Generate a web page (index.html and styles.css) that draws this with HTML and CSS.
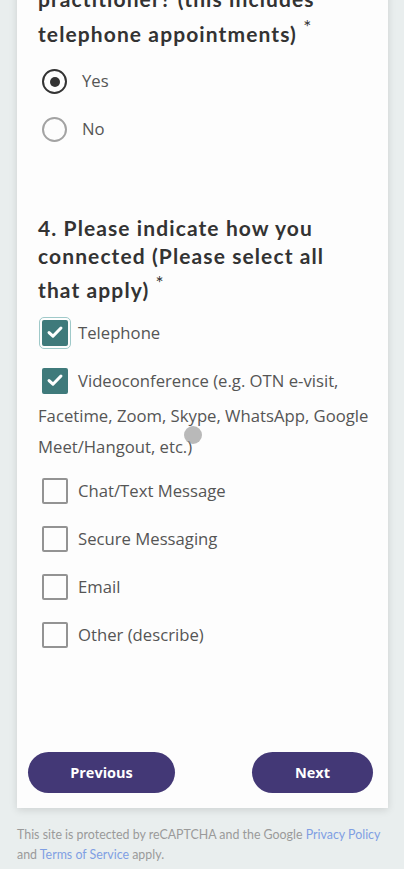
FILE: index.html
```html
<!DOCTYPE html>
<html lang="en">
<head>
<meta charset="utf-8">
<title>Survey</title>
<link rel="stylesheet" href="styles.css">
</head>
<body>
<div class="page">
  <form class="card">
    <fieldset class="question q3">
      <h2 class="q-title">practitioner? (this includes telephone appointments) <span class="req">*</span></h2>
      <div class="options">
        <label class="opt"><span class="radio checked"></span><span class="opt-text">Yes</span></label>
        <label class="opt"><span class="radio"></span><span class="opt-text">No</span></label>
      </div>
    </fieldset>

    <fieldset class="question q4">
      <h2 class="q-title">4. Please indicate how you connected (Please select all that apply) <span class="req">*</span></h2>
      <div class="options">
        <label class="opt"><span class="check checked focused"><svg viewBox="0 0 24 24"><path d="M6.5 12.5l3.6 3.4 7.4-7.6"/></svg></span><span class="opt-text">Telephone</span></label>
        <label class="opt opt-wrap"><span class="check checked"><svg viewBox="0 0 24 24"><path d="M6.5 12.5l3.6 3.4 7.4-7.6"/></svg></span><span class="opt-text">Videoconference (e.g. OTN e-visit, Facetime, Zoom, Skype, WhatsApp, Google Meet/Hangout, etc.)</span></label>
        <label class="opt"><span class="check"></span><span class="opt-text">Chat/Text Message</span></label>
        <label class="opt"><span class="check"></span><span class="opt-text">Secure Messaging</span></label>
        <label class="opt"><span class="check"></span><span class="opt-text">Email</span></label>
        <label class="opt"><span class="check"></span><span class="opt-text">Other (describe)</span></label>
      </div>
    </fieldset>

    <div class="nav">
      <button type="button" class="btn btn-prev">Previous</button>
      <button type="button" class="btn btn-next">Next</button>
    </div>
  </form>

  <p class="legal">This site is protected by reCAPTCHA and the Google <a href="#">Privacy Policy</a> and <a href="#">Terms of Service</a> apply.</p>

  <div class="touch"></div>
</div>
</body>
</html>
```

FILE: styles.css
```css
html, body {
  margin: 0;
  padding: 0;
  background: #e9eeee;
}

body {
  font-family: "Open Sans", "Noto Sans", sans-serif;
  color: #555;
  overflow: hidden;
}

.page {
  position: relative;
  width: 404px;
  height: 869px;
  overflow: hidden;
}

.card {
  margin: -15px 16px 0 17px;
  background: #fdfdfd;
  box-shadow: 0 2px 8px rgba(0, 0, 0, 0.12);
  padding: 0 16px 15px 21px;
}

.question {
  border: 0;
  margin: 0;
  padding: 0;
  min-width: 0;
}

.q4 {
  margin-top: 66px;
}

.q-title {
  margin: 0 0 13px;
  padding-right: 8px;
  font-family: "Lato", sans-serif;
  font-weight: 700;
  font-size: 21px;
  line-height: 27.5px;
  letter-spacing: 1.1px;
  color: #333;
}

.q3 .q-title {
  margin-bottom: 18px;
}

.req {
  font-size: 19px;
  vertical-align: 8px;
  font-weight: 400;
  letter-spacing: 0;
}

.opt {
  display: block;
  font-size: 16.7px;
  line-height: 31px;
  margin-bottom: 13px;
  color: #555;
}

.opt:last-child {
  margin-bottom: 0;
}

.radio {
  display: inline-block;
  box-sizing: border-box;
  width: 25px;
  height: 25px;
  border: 2.5px solid #a3a3a3;
  border-radius: 50%;
  vertical-align: -13px;
  margin: 0 15px 6px 4px;
  position: relative;
}

.radio.checked {
  border-color: #333;
}

.radio.checked::after {
  content: "";
  position: absolute;
  left: 50%;
  top: 50%;
  width: 10px;
  height: 10px;
  margin: -5px 0 0 -5px;
  border-radius: 50%;
  background: #333;
}

.check {
  display: inline-block;
  box-sizing: border-box;
  width: 26px;
  height: 26px;
  border: 2.5px solid #939393;
  border-radius: 2px;
  vertical-align: -13px;
  margin: 0 10px 6px 4px;
  position: relative;
}

.check.checked {
  background: #3f7a7b;
  border-color: #3f7a7b;
}

.check.focused {
  outline: 1px solid #9fc9c9;
  outline-offset: 2px;
}

.check svg {
  position: absolute;
  left: -2.5px;
  top: -2.5px;
  width: 26px;
  height: 26px;
  fill: none;
  stroke: #fff;
  stroke-width: 2.8;
  stroke-linecap: round;
  stroke-linejoin: round;
}

.nav {
  display: flex;
  justify-content: space-between;
  margin: 98px -1px 0 -10px;
}

.btn {
  height: 41px;
  border: 0;
  border-radius: 21px;
  background: #433876;
  color: #fff;
  font-family: "Open Sans", sans-serif;
  font-weight: 700;
  font-size: 14.5px;
  cursor: pointer;
}

.btn-prev {
  width: 147px;
}

.btn-next {
  width: 121px;
}

.legal {
  margin: 17px 8px 0 17px;
  font-family: "Lato", sans-serif;
  font-size: 12.4px;
  line-height: 20px;
  color: #9a9a9a;
}

.legal a {
  color: #7f9fe3;
  text-decoration: none;
}

.touch {
  position: absolute;
  left: 184px;
  top: 426px;
  width: 18px;
  height: 18px;
  border-radius: 50%;
  background: rgba(140, 140, 140, 0.6);
}
```
